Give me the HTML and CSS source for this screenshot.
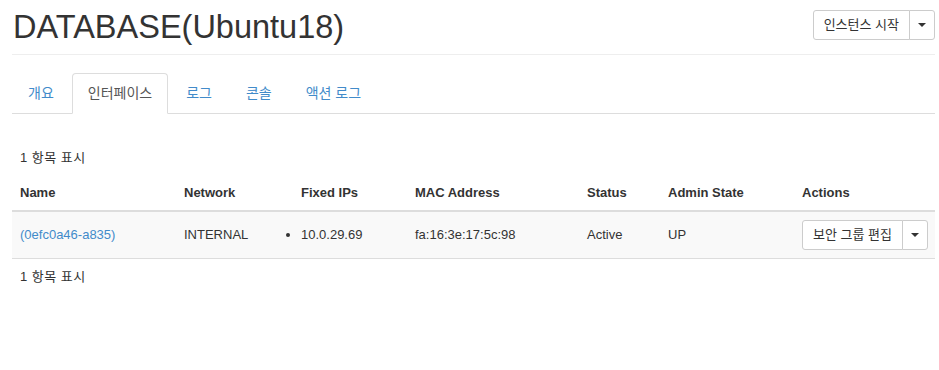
FILE: index.html
```html
<!DOCTYPE html>
<html lang="ko">
<head>
  <meta charset="UTF-8">
  <title>DATABASE(Ubuntu18)</title>
  <link rel="stylesheet" href="styles.css">
</head>
<body>
  <div class="page">
    <div class="page-header">
      <h1>DATABASE(Ubuntu18)</h1>
      <div class="btn-group">
        <button class="btn">인스턴스 시작</button>
        <button class="btn btn-toggle"><span class="caret"></span></button>
      </div>
    </div>

    <ul class="nav-tabs">
      <li><a href="#">개요</a></li>
      <li class="active"><a href="#">인터페이스</a></li>
      <li><a href="#">로그</a></li>
      <li><a href="#">콘솔</a></li>
      <li><a href="#">액션 로그</a></li>
    </ul>

    <table class="table">
      <colgroup>
        <col style="width: 164px">
        <col style="width: 117px">
        <col style="width: 114px">
        <col style="width: 172px">
        <col style="width: 81px">
        <col style="width: 134px">
        <col>
      </colgroup>
      <thead>
        <tr class="caption-row">
          <td colspan="7">1 항목 표시</td>
        </tr>
        <tr class="head-row">
          <th>Name</th>
          <th>Network</th>
          <th>Fixed IPs</th>
          <th>MAC Address</th>
          <th>Status</th>
          <th>Admin State</th>
          <th>Actions</th>
        </tr>
      </thead>
      <tbody>
        <tr class="data-row">
          <td><a href="#">(0efc0a46-a835)</a></td>
          <td>INTERNAL</td>
          <td>
            <ul class="ip-list">
              <li>10.0.29.69</li>
            </ul>
          </td>
          <td>fa:16:3e:17:5c:98</td>
          <td>Active</td>
          <td>UP</td>
          <td class="actions-cell">
            <div class="btn-group">
              <button class="btn">보안 그룹 편집</button>
              <button class="btn btn-toggle"><span class="caret"></span></button>
            </div>
          </td>
        </tr>
      </tbody>
      <tfoot>
        <tr class="caption-row">
          <td colspan="7">1 항목 표시</td>
        </tr>
      </tfoot>
    </table>
  </div>
</body>
</html>
```

FILE: styles.css
```css
body {
    margin: 0;
    font-family: "Liberation Sans", Arial, "Noto Sans CJK KR", sans-serif;
    font-size: 13px;
    line-height: 19px;
    color: #333;
    background-color: #fff;
}

a {
    color: #428bca;
    text-decoration: none;
}

.page {
    padding: 0 4px 0 12px;
}

.page-header {
    display: flex;
    justify-content: space-between;
    align-items: flex-start;
    padding: 9px 0 9px;
    border-bottom: 1px solid #eee;
}

.page-header h1 {
    margin: 0 0 0 1px;
    font-size: 32.5px;
    line-height: 36px;
    font-weight: normal;
    color: #333;
}

.page-header .btn-group {
    margin-top: 1px;
}

.btn-group {
    display: inline-flex;
    white-space: nowrap;
}

.btn {
    font-family: inherit;
    font-size: 13px;
    line-height: 18px;
    padding: 5px 10px;
    color: #333;
    white-space: nowrap;
    background-color: #fff;
    border: 1px solid #ccc;
    border-radius: 3px;
    cursor: pointer;
}

.btn-group .btn:first-child {
    border-top-right-radius: 0;
    border-bottom-right-radius: 0;
}

.btn-toggle {
    margin-left: -1px;
    padding: 5px 8px;
    border-top-left-radius: 0;
    border-bottom-left-radius: 0;
    display: flex;
    align-items: center;
}

.caret {
    display: inline-block;
    width: 0;
    height: 0;
    border-top: 4px solid #333;
    border-left: 4px solid transparent;
    border-right: 4px solid transparent;
}

.nav-tabs {
    display: flex;
    list-style: none;
    margin: 18px 0 0;
    padding: 0;
    border-bottom: 1px solid #ddd;
}

.nav-tabs li {
    margin-right: 2px;
    margin-bottom: -1px;
}

.nav-tabs a {
    display: block;
    font-size: 14px;
    padding: 10px 15px;
    border: 1px solid transparent;
    border-radius: 4px 4px 0 0;
}

.nav-tabs .active a {
    color: #555;
    background-color: #fff;
    border-color: #ddd;
    border-bottom-color: transparent;
}

.table {
    width: 100%;
    margin-top: 26px;
    border-collapse: collapse;
    table-layout: fixed;
}

.table th,
.table td {
    padding: 8px;
    text-align: left;
    vertical-align: middle;
}

.caption-row td {
    letter-spacing: 0.5px;
}

.head-row th {
    font-weight: bold;
    border-bottom: 2px solid #ddd;
}

.data-row td {
    padding-bottom: 10px;
    background-color: #f9f9f9;
    border-bottom: 1px solid #ddd;
}

.data-row .actions-cell {
    padding-bottom: 8px;
}

.ip-list {
    margin: 0;
    padding: 0;
    list-style: disc outside;
}
```
